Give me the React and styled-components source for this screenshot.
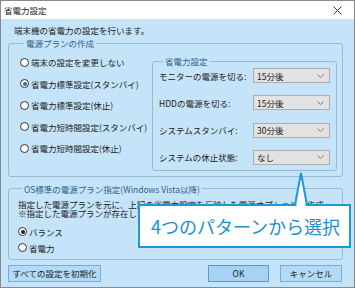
import React from "react";
import styled, { createGlobalStyle } from "styled-components";

const GlobalStyle = createGlobalStyle`
  body {
    margin: 0;
    background: #ffffff;
  }
  * {
    box-sizing: border-box;
  }
`;

const FONT = `"Noto Sans CJK JP", "Noto Sans", sans-serif`;

const plans = [
  { label: "端末の設定を変更しない", checked: false },
  { label: "省電力標準設定(スタンバイ)", checked: true },
  { label: "省電力標準設定(休止)", checked: false },
  { label: "省電力短時間設定(スタンバイ)", checked: false },
  { label: "省電力短時間設定(休止)", checked: false },
];

const settings = [
  { label: "モニターの電源を切る:", value: "15分後" },
  { label: "HDDの電源を切る:", value: "15分後" },
  { label: "システムスタンバイ:", value: "30分後" },
  { label: "システムの休止状態:", value: "なし" },
];

function App() {
  return (
    <>
      <GlobalStyle />
      <Window>
        <TitleBar>
          <span>省電力設定</span>
          <svg width="9" height="9" viewBox="0 0 9 9">
            <path d="M0.5 0.5 L8.5 8.5 M8.5 0.5 L0.5 8.5" stroke="#333" strokeWidth="1" />
          </svg>
        </TitleBar>
        <Body>
          <Intro>端末機の省電力の設定を行います。</Intro>
          <Group>
            <Legend>電源プランの作成</Legend>
            <RadioColumn>
              {plans.map((p) => (
                <RadioRow key={p.label}>
                  <Circle $checked={p.checked} $dot="#1f6fd1" />
                  {p.label}
                </RadioRow>
              ))}
            </RadioColumn>
            <InnerGroup>
              <Legend>省電力設定</Legend>
              {settings.map((s) => (
                <SettingRow key={s.label}>
                  <span>{s.label}</span>
                  <Select>
                    {s.value}
                    <svg width="7" height="4" viewBox="0 0 7 4">
                      <polyline points="0.5,0.5 3.5,3.5 6.5,0.5" fill="none" stroke="#777" strokeWidth="1" />
                    </svg>
                  </Select>
                </SettingRow>
              ))}
            </InnerGroup>
          </Group>
          <OsGroup>
            <Legend>OS標準の電源プラン指定(Windows Vista以降)</Legend>
            <Note>
              指定した電源プランを元に、上記の省電力設定を反映した電源オプションを作成
              <br />
              ※指定した電源プランが存在しない場合はバランスを使用します。
            </Note>
            <OsRadios>
              <RadioRow $tight>
                <Circle $checked $dot="#222" />
                バランス
              </RadioRow>
              <RadioRow $tight>
                <Circle />
                省電力
              </RadioRow>
            </OsRadios>
          </OsGroup>
          <ButtonRow>
            <Button $width={93}>すべての設定を初期化</Button>
            <RightButtons>
              <Button $width={61} $default>OK</Button>
              <Button $width={62}>キャンセル</Button>
            </RightButtons>
          </ButtonRow>
        </Body>
        <Callout>4つのパターンから選択</Callout>
        <Pointer width="16" height="36" viewBox="0 0 16 36">
          <polygon points="3,36 8,3 13,36" fill="#fff" />
          <polyline points="2,33 8,1 14,33" fill="none" stroke="#1b9ad6" strokeWidth="2" />
        </Pointer>
      </Window>
    </>
  );
}

export default App;

const Window = styled.div`
  position: relative;
  width: 355px;
  height: 288px;
  border: 1px solid #8a8a8a;
  display: flex;
  flex-direction: column;
  font-family: ${FONT};
  font-size: 8.5px;
  color: #1a1a1a;
  overflow: hidden;
`;

const TitleBar = styled.div`
  height: 18px;
  flex: none;
  background: #ffffff;
  display: flex;
  align-items: center;
  justify-content: space-between;
  padding: 0 12px 0 3px;
  font-size: 8.5px;
`;

const Body = styled.div`
  flex: 1;
  background: #c6e4f9;
  padding: 0 11px 0 7px;
  display: flex;
  flex-direction: column;
`;

const Intro = styled.div`
  margin-top: 5px;
  padding-left: 6px;
  line-height: 12px;
`;

const Group = styled.fieldset`
  margin: 1px 0 0;
  padding: 6px 5px 5px 11px;
  border: 1px solid #9cb8cf;
  border-radius: 3px;
  display: flex;
  min-width: 0;
`;

const Legend = styled.legend`
  margin-left: 4px;
  padding: 0 2px;
  line-height: 12px;
  color: #2f5d86;
`;

const RadioColumn = styled.div`
  flex: 1;
  display: flex;
  flex-direction: column;
  gap: 7.5px;
`;

const RadioRow = styled.div`
  display: flex;
  align-items: center;
  gap: 2px;
  height: ${(p) => (p.$tight ? "12px" : "14px")};
  white-space: nowrap;
`;

const Circle = styled.span`
  position: relative;
  width: 9px;
  height: 9px;
  flex: none;
  border-radius: 50%;
  border: 1px solid #333;
  background: #fff;
  &::after {
    content: "";
    display: ${(p) => (p.$checked ? "block" : "none")};
    position: absolute;
    left: 1.5px;
    top: 1.5px;
    width: 4px;
    height: 4px;
    border-radius: 50%;
    background: ${(p) => p.$dot || "#333"};
  }
`;

const InnerGroup = styled.fieldset`
  margin: 0;
  width: 185px;
  flex: none;
  padding: 1px 6px 5px 6px;
  border: 1px solid #9cb8cf;
  border-radius: 3px;
  display: flex;
  flex-direction: column;
  gap: 12.3px;
  min-width: 0;
`;

const SettingRow = styled.div`
  display: flex;
  align-items: center;
  justify-content: space-between;
  height: 15px;
  white-space: nowrap;
`;

const Select = styled.div`
  width: 77px;
  height: 15px;
  background: #e2e2e2;
  border: 1px solid #adadad;
  display: flex;
  align-items: center;
  justify-content: space-between;
  padding: 0 5px 0 3px;
`;

const OsGroup = styled.fieldset`
  margin: 6px 0 0;
  padding: 5px 5px 5px 9px;
  border: 1px solid #9cb8cf;
  border-radius: 3px;
  min-width: 0;
`;

const Note = styled.div`
  line-height: 9px;
  white-space: nowrap;
`;

const OsRadios = styled.div`
  margin-top: 8px;
  display: flex;
  flex-direction: column;
  gap: 4px;
`;

const ButtonRow = styled.div`
  margin-top: 5px;
  display: flex;
  justify-content: space-between;
  padding-right: 1px;
`;

const RightButtons = styled.div`
  display: flex;
  gap: 11px;
`;

const Button = styled.div`
  width: ${(p) => p.$width}px;
  height: 17px;
  display: flex;
  align-items: center;
  justify-content: center;
  background: ${(p) => (p.$default ? "#a6d3f5" : "#b3daf6")};
  border: 1px solid ${(p) => (p.$default ? "#5e97cf" : "#7ea9d2")};
  color: #1a1a1a;
`;

const Callout = styled.div`
  position: absolute;
  left: 137px;
  top: 203px;
  width: 213px;
  height: 44px;
  background: #ffffff;
  border: 2px solid #1b9ad6;
  display: flex;
  align-items: center;
  padding-left: 11px;
  font-size: 18px;
  color: #1b8fd1;
  white-space: nowrap;
`;

const Pointer = styled.svg`
  position: absolute;
  left: 292px;
  top: 171px;
`;
